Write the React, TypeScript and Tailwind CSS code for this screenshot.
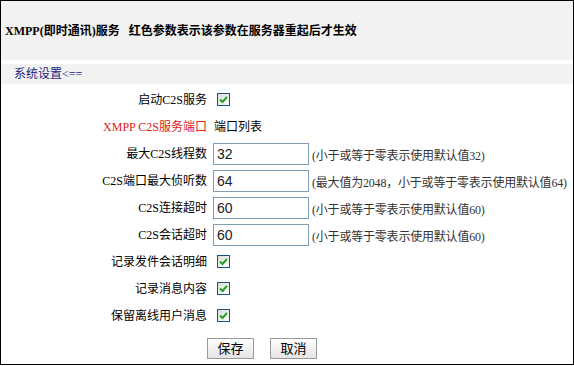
import React from "react";

const font = { fontFamily: '"Liberation Serif", "Noto Sans CJK SC", serif' };
const sans = { fontFamily: '"Liberation Sans", "Noto Sans CJK SC", sans-serif' };

const Check = () => (
  <span className="ml-[4px] inline-flex h-[13px] w-[13px] items-center justify-center border border-[#1c5180] bg-gradient-to-br from-[#dcdcd7] to-white">
    <svg width="9" height="9" viewBox="0 0 9 9">
      <path d="M1 4.5 L3.5 7 L8 1.8" fill="none" stroke="#21a121" strokeWidth="2" />
    </svg>
  </span>
);

const Field = ({ value }: { value: string }) => (
  <input
    defaultValue={value}
    className="h-[22px] w-[96px] border border-[#7f9db9] bg-white px-[3px] text-[14px] text-[#222] outline-none"
    style={sans}
  />
);

const rows: { label: string; red?: boolean; kind: "check" | "text" | "input"; value?: string; hint?: string }[] = [
  { label: "启动C2S服务", kind: "check" },
  { label: "XMPP C2S服务端口", red: true, kind: "text", value: "端口列表" },
  { label: "最大C2S线程数", kind: "input", value: "32", hint: "(小于或等于零表示使用默认值32)" },
  { label: "C2S端口最大侦听数", kind: "input", value: "64", hint: "(最大值为2048，小于或等于零表示使用默认值64)" },
  { label: "C2S连接超时", kind: "input", value: "60", hint: "(小于或等于零表示使用默认值60)" },
  { label: "C2S会话超时", kind: "input", value: "60", hint: "(小于或等于零表示使用默认值60)" },
  { label: "记录发件会话明细", kind: "check" },
  { label: "记录消息内容", kind: "check" },
  { label: "保留离线用户消息", kind: "check" },
];

export default function App() {
  return (
    <div className="h-[366px] w-[574px] bg-white text-[12px] text-black" style={font}>
      <div className="flex h-[365px] flex-col overflow-hidden border border-black">
        {/* header */}
        <div className="flex h-[59px] items-center bg-[#f2f2f2] pl-[4px] font-bold">
          XMPP(即时通讯)服务&nbsp;&nbsp;&nbsp;红色参数表示该参数在服务器重起后才生效
        </div>
        <div className="mt-[4px] flex h-[20px] items-center bg-[#f2f2f2] pl-[13px] text-[#1c1c80]">
          系统设置&lt;==
        </div>

        {/* form */}
        <div className="mt-[2px] flex flex-col">
          {rows.map((r, i) => (
            <div key={i} className="flex h-[27px] items-center">
              <div className={`w-[206px] text-right ${r.red ? "text-[#e02020]" : ""}`}>{r.label}</div>
              <div className="ml-[6px] flex items-center whitespace-nowrap">
                {r.kind === "check" && <Check />}
                {r.kind === "text" && <span className="ml-[1px]">{r.value}</span>}
                {r.kind === "input" && (
                  <>
                    <Field value={r.value!} />
                    <span className="ml-[3px] mt-[4px] tracking-[-0.2px] text-[#333]">{r.hint}</span>
                  </>
                )}
              </div>
            </div>
          ))}
        </div>

        <div className="mt-[9px] flex gap-[16px] pl-[206px]">
          <button className="h-[21px] w-[47px] border border-[#9a9a9a] bg-gradient-to-b from-white to-[#e4e4e4] text-[13px]">
            保存
          </button>
          <button className="h-[21px] w-[47px] border border-[#9a9a9a] bg-gradient-to-b from-white to-[#e4e4e4] text-[13px]">
            取消
          </button>
        </div>
      </div>
    </div>
  );
}
